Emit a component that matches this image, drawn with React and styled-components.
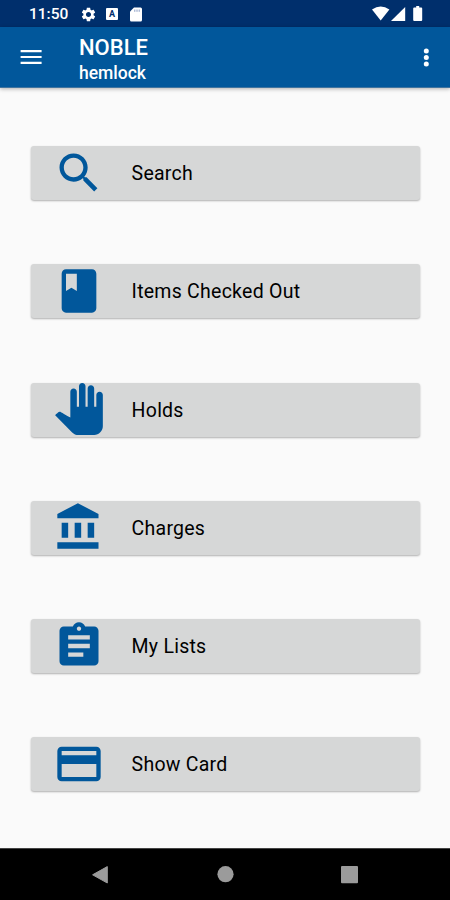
import React from 'react';
import styled, { createGlobalStyle } from 'styled-components';

const items = [
    {
        label: 'Search',
        path: 'M15.5 14h-.79l-.28-.27C15.41 12.59 16 11.11 16 9.5 16 5.91 13.09 3 9.5 3S3 5.91 3 9.5 5.91 16 9.5 16c1.61 0 3.09-.59 4.23-1.57l.27.28v.79l5 4.99L20.49 19l-4.99-5zm-6 0C7.01 14 5 11.99 5 9.5S7.01 5 9.5 5 14 7.01 14 9.5 11.99 14 9.5 14z',
    },
    {
        label: 'Items Checked Out',
        path: 'M18 2H6c-1.1 0-2 .9-2 2v16c0 1.1.9 2 2 2h12c1.1 0 2-.9 2-2V4c0-1.1-.9-2-2-2zM6 4h5v8l-2.5-1.5L6 12V4z',
    },
    {
        label: 'Holds',
        path: 'M23 5.5V20c0 2.2-1.8 4-4 4h-7.3c-1.08 0-2.1-.43-2.85-1.19L1 14.83s1.26-1.23 1.3-1.25c.22-.19.49-.29.79-.29.22 0 .42.06.6.16.04.01 4.31 2.46 4.31 2.46V4c0-.83.67-1.5 1.5-1.5S11 3.17 11 4v7h1V1.5c0-.83.67-1.5 1.5-1.5S15 .67 15 1.5V11h1V2.5c0-.83.67-1.5 1.5-1.5s1.5.67 1.5 1.5V11h1V5.5c0-.83.67-1.5 1.5-1.5s1.5.67 1.5 1.5z',
    },
    {
        label: 'Charges',
        path: 'M4 10v7h3v-7H4zm6 0v7h3v-7h-3zM2 22h19v-3H2v3zm14-12v7h3v-7h-3zm-4.5-9L2 6v2h19V6l-9.5-5z',
    },
    {
        label: 'My Lists',
        path: 'M19 3h-4.18C14.4 1.84 13.3 1 12 1c-1.3 0-2.4.84-2.82 2H5c-1.1 0-2 .9-2 2v14c0 1.1.9 2 2 2h14c1.1 0 2-.9 2-2V5c0-1.1-.9-2-2-2zm-7 0c.55 0 1 .45 1 1s-.45 1-1 1-1-.45-1-1 .45-1 1-1zm2 14H7v-2h7v2zm3-4H7v-2h10v2zm0-4H7V7h10v2z',
    },
    {
        label: 'Show Card',
        path: 'M20 4H4c-1.11 0-1.99.89-1.99 2L2 18c0 1.11.89 2 2 2h16c1.11 0 2-.89 2-2V6c0-1.11-.89-2-2-2zm0 14H4v-6h16v6zm0-10H4V6h16v2z',
    },
];

const StatusIcons = () => (
    <>
        <StatusLeft>
            <Clock>11:50</Clock>
            <svg width="17" height="17" viewBox="0 0 24 24" fill="currentColor">
                <path d="M19.14 12.94c.04-.3.06-.61.06-.94 0-.32-.02-.64-.07-.94l2.03-1.58c.18-.14.23-.41.12-.61l-1.92-3.32c-.12-.22-.37-.29-.59-.22l-2.39.96c-.5-.38-1.03-.7-1.62-.94l-.36-2.54c-.04-.24-.24-.41-.48-.41h-3.84c-.24 0-.43.17-.47.41l-.36 2.54c-.59.24-1.13.57-1.62.94l-2.39-.96c-.22-.08-.47 0-.59.22L2.74 8.87c-.12.21-.08.47.12.61l2.03 1.58c-.05.3-.09.63-.09.94s.02.64.07.94l-2.03 1.58c-.18.14-.23.41-.12.61l1.92 3.32c.12.22.37.29.59.22l2.39-.96c.5.38 1.03.7 1.62.94l.36 2.54c.05.24.24.41.48.41h3.84c.24 0 .44-.17.47-.41l.36-2.54c.59-.24 1.13-.56 1.62-.94l2.39.96c.22.08.47 0 .59-.22l1.92-3.32c.12-.22.07-.47-.12-.61l-2.01-1.58zM12 15.6c-1.98 0-3.6-1.62-3.6-3.6s1.62-3.6 3.6-3.6 3.6 1.62 3.6 3.6-1.62 3.6-3.6 3.6z" />
            </svg>
            <Keyboard>A</Keyboard>
            <svg width="12" height="15" viewBox="0 0 12 15">
                <path d="M4 .5h6.6Q12 .5 12 2v11q0 1.5-1.4 1.5H1.4Q0 14.5 0 13V4.6z" fill="#fff" />
                <path d="M4.8 2.5v2.3M7 2.5v2.3M9.2 2.5v2.3" stroke="#8b9dc4" strokeWidth="1" />
            </svg>
        </StatusLeft>
        <svg width="51" height="16" viewBox="0 0 51 16" fill="#fff">
            <path d="M-1 3.4Q7.7-2.6 16.4 3.4L7.7 14.6z" />
            <path d="M32.2 1v14H18z" />
            <path d="M43.2 0h3v1.4h2q1 0 1 1V14q0 1-1 1h-7q-1 0-1-1V2.4q0-1 1-1h2z" />
        </svg>
    </>
);

const App = () => {
    return (
        <Screen>
            <GlobalStyle />
            <StatusBar>
                <StatusIcons />
            </StatusBar>
            <AppBar>
                <IconButton aria-label="Menu">
                    <svg width="22" height="16" viewBox="0 0 22 16" fill="#fff">
                        <path d="M.6 1h21v2.2H.6zM.6 6.9h21v2.2H.6zM.6 12.8h21V15H.6z" />
                    </svg>
                </IconButton>
                <Titles>
                    <h1>NOBLE</h1>
                    <h2>hemlock</h2>
                </Titles>
                <IconButton aria-label="More">
                    <svg width="6" height="20" viewBox="0 0 6 20" fill="#fff">
                        <circle cx="3.3" cy="3.9" r="2.5" />
                        <circle cx="3.3" cy="10.4" r="2.5" />
                        <circle cx="3.3" cy="16.9" r="2.5" />
                    </svg>
                </IconButton>
            </AppBar>
            <Menu>
                {items.map((item) => (
                    <MenuButton key={item.label}>
                        <svg width="52" height="52" viewBox="0 0 24 24" fill="currentColor">
                            <path d={item.path} />
                        </svg>
                        <span>{item.label}</span>
                    </MenuButton>
                ))}
            </Menu>
            <NavBar>
                <svg width="17" height="18" viewBox="0 0 17 18" fill="#9b9b9b">
                    <path d="M15.3 .6v16.4L.6 8.8z" stroke="#9b9b9b" strokeLinejoin="round" />
                </svg>
                <svg width="17" height="17" viewBox="0 0 17 17" fill="#9b9b9b">
                    <circle cx="8.5" cy="8.2" r="8.1" />
                </svg>
                <svg width="17" height="18" viewBox="0 0 17 18" fill="#9b9b9b">
                    <rect width="17" height="17.3" rx="1" />
                </svg>
            </NavBar>
        </Screen>
    );
};

const GlobalStyle = createGlobalStyle`
    body{
        margin: 0;
        background: #fafafa;
        font-family: Roboto, sans-serif;
    }
`;

const Screen = styled.div`
    display: flex;
    flex-direction: column;
    width: 450px;
    height: 900px;
    overflow: hidden;
    background: #fafafa;
    svg{
        display: block;
        flex-shrink: 0;
        overflow: visible;
    }
`;

const StatusBar = styled.div`
    display: flex;
    align-items: center;
    justify-content: space-between;
    box-sizing: border-box;
    height: 27px;
    padding: 1px 26px 0 29px;
    background: #002f6c;
    color: #fff;
`;

const StatusLeft = styled.div`
    display: flex;
    align-items: center;
`;

const Clock = styled.span`
    width: 51px;
    font-size: 15.5px;
    font-weight: 500;
`;

const Keyboard = styled.span`
    width: 12px;
    height: 12px;
    margin: 0 12px 0 9px;
    border-radius: 1px;
    background: #fff;
    color: #002f6c;
    font-size: 9px;
    font-weight: 700;
    line-height: 12px;
    text-align: center;
`;

const AppBar = styled.header`
    display: flex;
    align-items: center;
    box-sizing: border-box;
    height: 61px;
    padding: 0 21px 0 20px;
    background: #01579b;
    border-bottom: 1px solid #40749f;
    box-shadow: 0 1px 4px rgba(0, 0, 0, 0.3);
    color: #fff;
`;

const IconButton = styled.button`
    padding: 0;
    border: 0;
    background: none;
`;

const Titles = styled.div`
    flex: 1;
    margin-left: 37px;
    padding-top: 7px;
    h1{
        margin: 0;
        font-size: 22px;
        font-weight: 500;
        line-height: 26px;
    }
    h2{
        margin: 0;
        font-size: 17.5px;
        font-weight: 500;
        line-height: 25px;
    }
`;

const Menu = styled.main`
    display: flex;
    flex: 1;
    flex-direction: column;
    gap: 64.2px;
    padding: 58.3px 29.6px 0 30.6px;
`;

const MenuButton = styled.button`
    display: flex;
    align-items: center;
    flex-shrink: 0;
    height: 54px;
    padding: 0 0 1px 22px;
    border: 0;
    border-radius: 3px;
    background: #d6d7d7;
    box-shadow: 0 1px 2px rgba(0, 0, 0, 0.3);
    color: #01579b;
    font-family: inherit;
    font-size: 19.5px;
    span{
        margin-left: 27px;
        padding-top: 2px;
        color: #000;
        letter-spacing: 0.25px;
    }
`;

const NavBar = styled.nav`
    display: flex;
    align-items: center;
    justify-content: space-between;
    box-sizing: border-box;
    height: 52px;
    padding: 0 92px;
    border-top: 1px solid #444;
    background: #000;
`;

export default App;
